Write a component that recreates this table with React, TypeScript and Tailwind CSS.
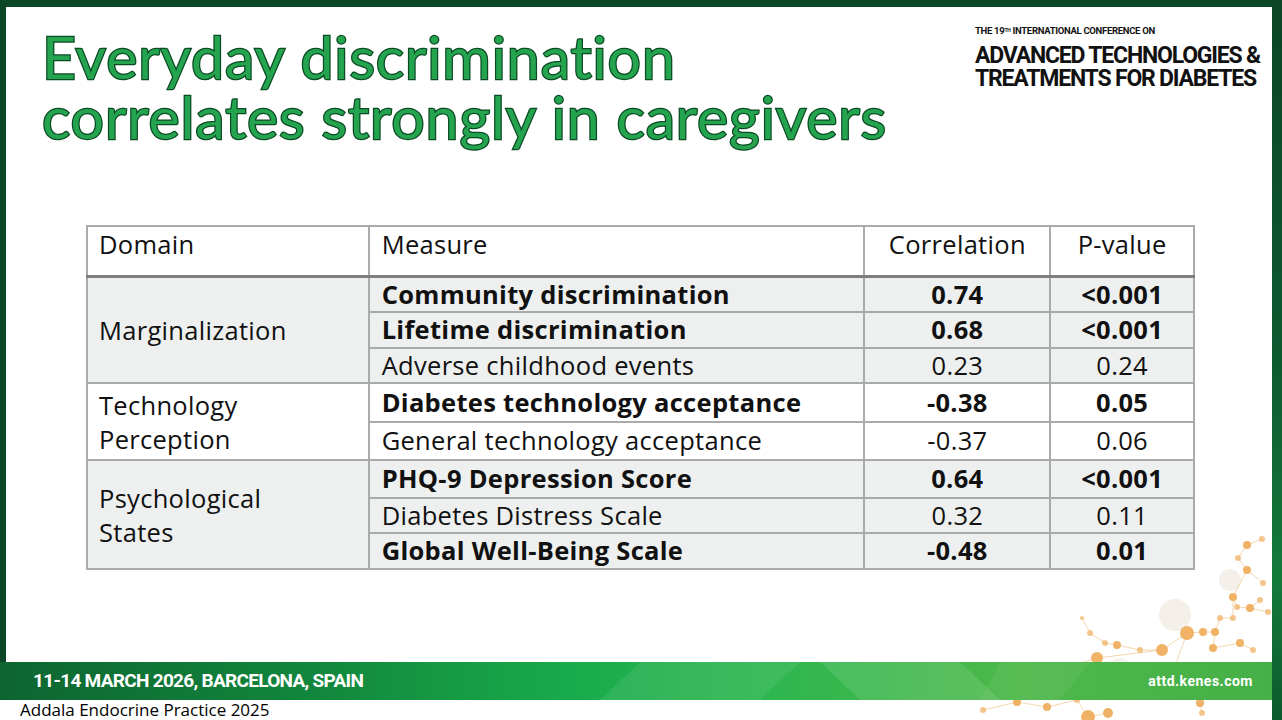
import React from "react";

type Row = { measure: string; corr: string; p: string; bold: boolean; h: string };
type Group = { domain: string[]; bg: string; rows: Row[] };

const groups: Group[] = [
  {
    domain: ["Marginalization"],
    bg: "bg-[#eef0ef]",
    rows: [
      { measure: "Community discrimination", corr: "0.74", p: "<0.001", bold: true, h: "h-[36px]" },
      { measure: "Lifetime discrimination", corr: "0.68", p: "<0.001", bold: true, h: "h-[36px]" },
      { measure: "Adverse childhood events", corr: "0.23", p: "0.24", bold: false, h: "h-[35px]" },
    ],
  },
  {
    domain: ["Technology", "Perception"],
    bg: "bg-white",
    rows: [
      { measure: "Diabetes technology acceptance", corr: "-0.38", p: "0.05", bold: true, h: "h-[39px]" },
      { measure: "General technology acceptance", corr: "-0.37", p: "0.06", bold: false, h: "h-[38px]" },
    ],
  },
  {
    domain: ["Psychological", "States"],
    bg: "bg-[#eef0ef]",
    rows: [
      { measure: "PHQ-9 Depression Score", corr: "0.64", p: "<0.001", bold: true, h: "h-[38px]" },
      { measure: "Diabetes Distress Scale", corr: "0.32", p: "0.11", bold: false, h: "h-[35px]" },
      { measure: "Global Well-Being Scale", corr: "-0.48", p: "0.01", bold: true, h: "h-[36px]" },
    ],
  },
];

// node coordinates inside the 312x200 decoration box (page x 960, y 520)
const nodes: [number, number, number][] = [
  [302, 19, 3], [287, 25, 4], [278, 38, 3], [287, 50, 4], [303, 63, 3], [273, 77, 4],
  [300, 80, 3], [277, 87, 3], [290, 88, 4], [308, 92, 3], [227, 113, 7], [243, 112, 4],
  [255, 112, 4], [253, 128, 4], [202, 130, 6], [180, 130, 3], [157, 125, 4], [145, 123, 3],
  [130, 113, 3], [122, 98, 2], [137, 138, 6], [280, 123, 4], [293, 130, 3], [260, 98, 3],
  [273, 98, 3], [57, 182, 4], [23, 190, 3], [87, 187, 4], [128, 197, 7], [148, 193, 5],
  [240, 183, 4], [242, 193, 3], [117, 180, 3], [96, 150, 2], [70, 158, 2], [210, 160, 3],
];

const links: [number, number][] = [
  [0, 1], [1, 2], [2, 3], [3, 4], [3, 5], [5, 7], [7, 8], [8, 9], [6, 8], [5, 24], [24, 23],
  [23, 12], [12, 11], [11, 10], [10, 14], [14, 15], [15, 16], [16, 17], [17, 18], [18, 19],
  [14, 20], [12, 13], [13, 21], [21, 22], [25, 26], [25, 27], [27, 32], [28, 29], [28, 32],
  [30, 31], [20, 33], [33, 34], [10, 35],
];

function Molecules() {
  return (
    <svg
      className="absolute left-[960px] top-[520px] pointer-events-none"
      width="312"
      height="200"
      viewBox="0 0 312 200"
    >
      <circle cx="215" cy="95" r="16" fill="#f4efe8" />
      <circle cx="270" cy="60" r="11" fill="#f4efe8" />
      <circle cx="160" cy="150" r="12" fill="#f5f1ec" />
      {links.map(([a, b], i) => (
        <line
          key={i}
          x1={nodes[a][0]}
          y1={nodes[a][1]}
          x2={nodes[b][0]}
          y2={nodes[b][1]}
          stroke="#f1cc9c"
          strokeWidth="0.8"
        />
      ))}
      {nodes.map(([x, y, r], i) => (
        <circle key={i} cx={x} cy={y} r={r} fill="#efae5e" opacity={r > 3 ? 0.95 : 0.7} />
      ))}
    </svg>
  );
}

function Title() {
  return (
    <h1 className="font-['Lato',sans-serif] font-normal text-[59px] leading-[60px] text-[#25a44f] [-webkit-text-stroke:2.5px_#0b4a24] [paint-order:stroke_fill] tracking-[0.9px]">
      Everyday discrimination
      <br />
      correlates strongly in caregivers
    </h1>
  );
}

function Logo() {
  return (
    <div className="w-[290px] font-['Roboto',sans-serif] text-[#111] leading-none pt-[19px]">
      <div className="text-[9.5px] font-bold tracking-[-0.3px]">
        THE 19<sup className="text-[5px]">TH</sup> INTERNATIONAL CONFERENCE ON
      </div>
      <div className="mt-[8px] text-[23px] font-bold tracking-[-1.2px] leading-[23px]">
        ADVANCED TECHNOLOGIES &amp;
        <br />
        TREATMENTS FOR DIABETES
      </div>
    </div>
  );
}

function DataTable() {
  const cell = "border-2 border-[#a9abaa]";
  const head = `${cell} border-b-[3px] border-b-[#7d7f7e] font-normal align-top pt-[3px] leading-[28px]`;
  return (
    <table className="border-collapse font-['Open_Sans',sans-serif] text-[25.5px] text-[#111] w-[1109px] tracking-[0.3px]">
      <colgroup>
        <col className="w-[282px]" />
        <col className="w-[497px]" />
        <col className="w-[186px]" />
        <col className="w-[144px]" />
      </colgroup>
      <thead>
        <tr className="h-[50px] bg-white">
          <th className={`${head} text-left pl-[11px]`}>Domain</th>
          <th className={`${head} text-left pl-[12px]`}>Measure</th>
          <th className={`${head} text-center`}>Correlation</th>
          <th className={`${head} text-center`}>P-value</th>
        </tr>
      </thead>
      <tbody>
        {groups.map((g) =>
          g.rows.map((r, i) => (
            <tr key={r.measure} className={`${g.bg} ${r.h}`}>
              {i === 0 && (
                <td rowSpan={g.rows.length} className={`${cell} pl-[11px] leading-[34px] align-middle`}>
                  {g.domain.map((d) => (
                    <div key={d}>{d}</div>
                  ))}
                </td>
              )}
              <td className={`${cell} pl-[12px] leading-none ${r.bold ? "font-bold" : ""}`}>{r.measure}</td>
              <td className={`${cell} text-center leading-none ${r.bold ? "font-bold" : ""}`}>{r.corr}</td>
              <td className={`${cell} text-center leading-none ${r.bold ? "font-bold" : ""}`}>{r.p}</td>
            </tr>
          ))
        )}
      </tbody>
    </table>
  );
}

function FooterBar() {
  return (
    <div className="relative z-10 h-[38px] bg-[linear-gradient(90deg,#0d6530_0%,#12873d_25%,#19ab4b_45%,#2db64f_60%,#4db84a_80%,#46b048_100%)] flex items-center justify-between pl-[33px] pr-[19px] overflow-hidden">
      <svg className="absolute inset-0" width="1272" height="38" viewBox="0 0 1272 38" preserveAspectRatio="none">
        <polygon points="640,0 800,0 760,38 600,38" fill="#ffffff" opacity="0.08" />
        <polygon points="820,0 960,0 1000,38 860,38" fill="#ffffff" opacity="0.1" />
        <polygon points="1000,0 1090,0 1060,38 980,38" fill="#ffffff" opacity="0.06" />
      </svg>
      <span className="relative font-['Roboto',sans-serif] font-bold text-white text-[19px] tracking-[-0.7px]">
        11-14 MARCH 2026, BARCELONA, SPAIN
      </span>
      <span className="relative font-['Roboto',sans-serif] font-bold text-white text-[14px] tracking-[0.5px]">
        attd.kenes.com
      </span>
    </div>
  );
}

export default function App() {
  return (
    <div className="relative w-[1282px] h-[720px] overflow-hidden bg-white flex flex-col">
      <div className="h-[7px] bg-[#0b4626] shrink-0" />
      <div className="flex flex-1">
        <div className="flex flex-col w-[1272px]">
          <div className="relative z-10 flex h-[655px]">
            <div className="w-[6px] bg-[#0b4626]" />
            <main className="flex-1 flex flex-col pl-[80px]">
              <div className="flex justify-between pr-[7px]">
                <div className="-ml-[44px] pt-[20px]">
                  <Title />
                </div>
                <Logo />
              </div>
              <div className="mt-[78px]">
                <DataTable />
              </div>
            </main>
          </div>
          <FooterBar />
          <div className="h-[20px] pl-[20px] font-['Open_Sans',sans-serif] text-[17px] leading-[20px] text-black">
            Addala Endocrine Practice 2025
          </div>
        </div>
        <div className="w-[10px] bg-[linear-gradient(180deg,#0b4626_0%,#0e5a2f_50%,#137a3a_80%,#0c5a2c_100%)]" />
      </div>
      <Molecules />
    </div>
  );
}
